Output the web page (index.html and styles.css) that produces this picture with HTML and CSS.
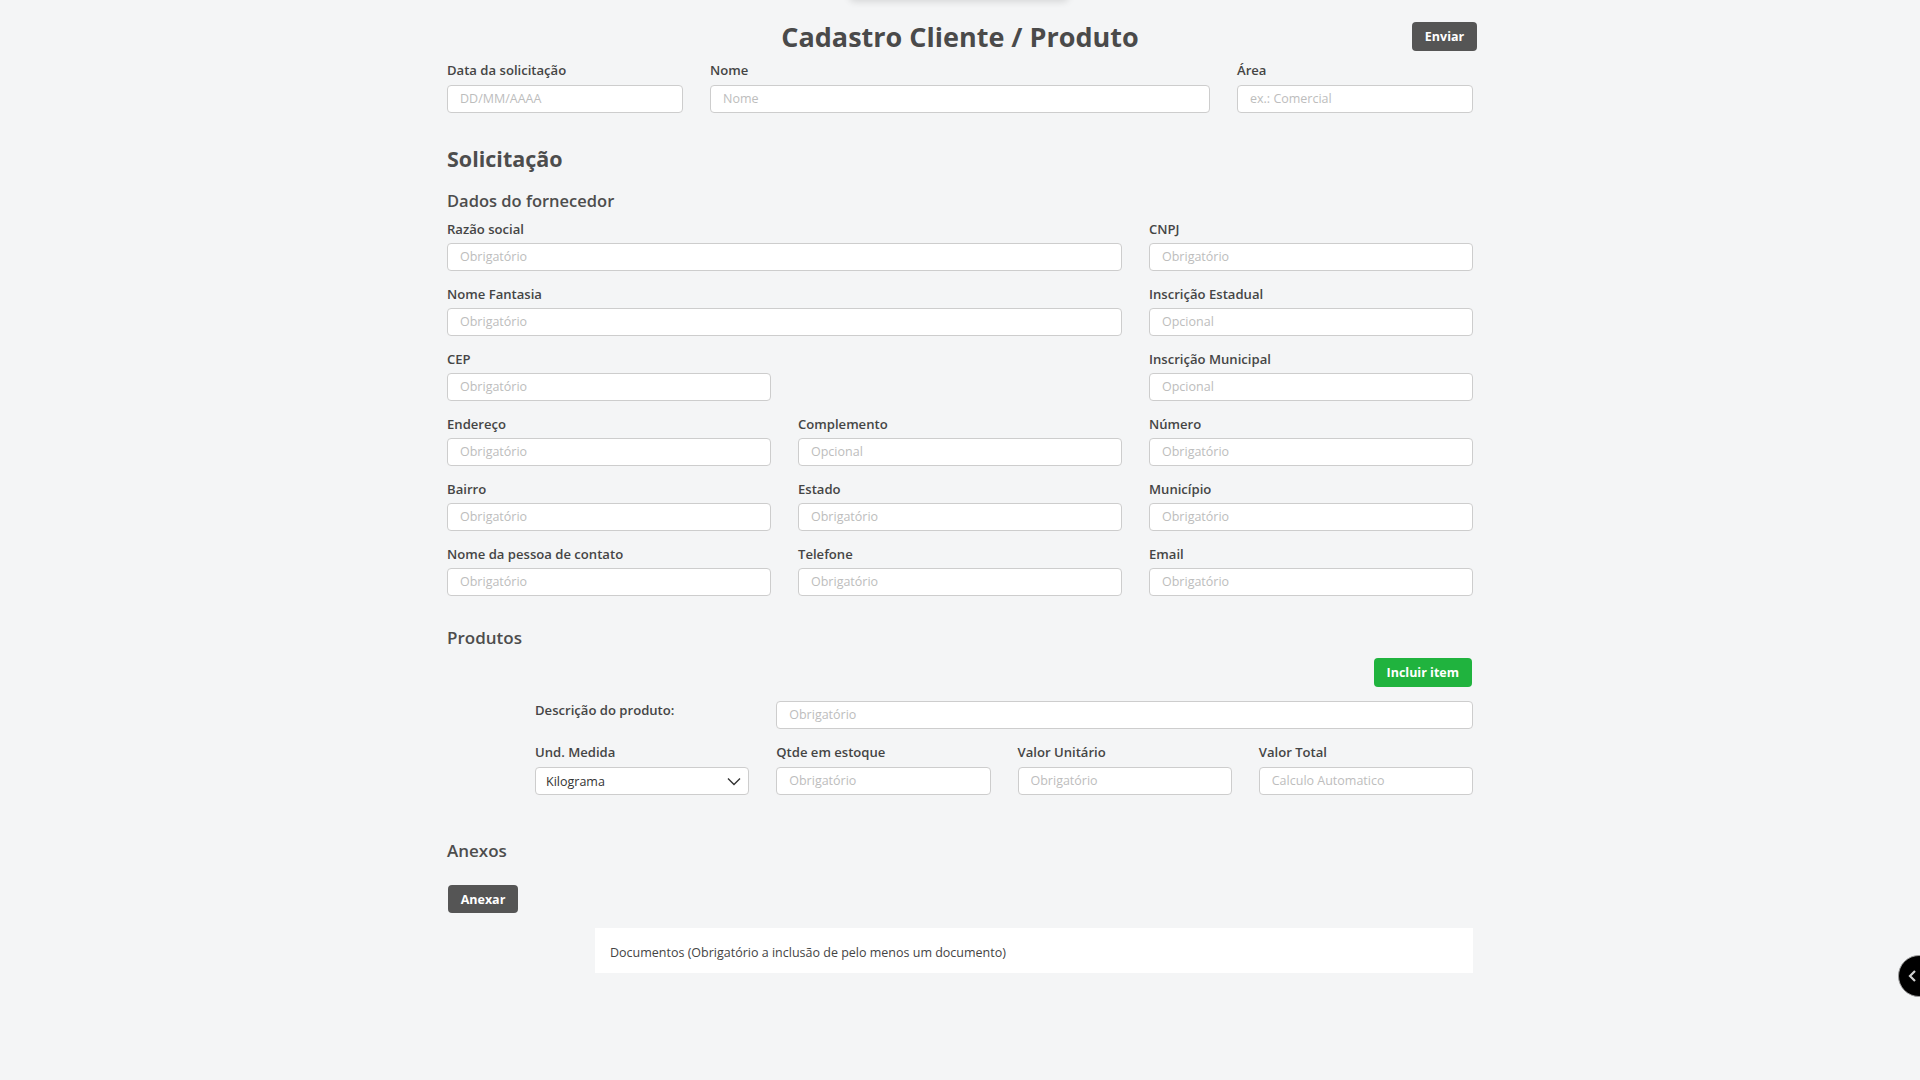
FILE: index.html
```html
<!DOCTYPE html>
<html lang="pt-BR">
<head>
<meta charset="utf-8">
<title>Cadastro Cliente / Produto</title>
<link rel="stylesheet" href="styles.css">
</head>
<body>
<div class="top-popover"></div>
<main class="page">
  <header class="header">
    <div></div>
    <h1 class="title">Cadastro Cliente / Produto</h1>
    <div class="header-actions"><button class="btn btn-dark btn-send">Enviar</button></div>
  </header>

  <div class="top-row">
    <div class="field"><label>Data da solicitação</label><input placeholder="DD/MM/AAAA"></div>
    <div class="field"><label>Nome</label><input placeholder="Nome"></div>
    <div class="field"><label>Área</label><input placeholder="ex.: Comercial"></div>
  </div>

  <h2 class="section-title">Solicitação</h2>
  <h3 class="sub-title">Dados do fornecedor</h3>

  <div class="grid3">
    <div class="field span2"><label>Razão social</label><input placeholder="Obrigatório"></div>
    <div class="field"><label>CNPJ</label><input placeholder="Obrigatório"></div>
    <div class="field span2"><label>Nome Fantasia</label><input placeholder="Obrigatório"></div>
    <div class="field"><label>Inscrição Estadual</label><input placeholder="Opcional"></div>
    <div class="field"><label>CEP</label><input placeholder="Obrigatório"></div>
    <div class="field"></div>
    <div class="field"><label>Inscrição Municipal</label><input placeholder="Opcional"></div>
    <div class="field"><label>Endereço</label><input placeholder="Obrigatório"></div>
    <div class="field"><label>Complemento</label><input placeholder="Opcional"></div>
    <div class="field"><label>Número</label><input placeholder="Obrigatório"></div>
    <div class="field"><label>Bairro</label><input placeholder="Obrigatório"></div>
    <div class="field"><label>Estado</label><input placeholder="Obrigatório"></div>
    <div class="field"><label>Município</label><input placeholder="Obrigatório"></div>
    <div class="field"><label>Nome da pessoa de contato</label><input placeholder="Obrigatório"></div>
    <div class="field"><label>Telefone</label><input placeholder="Obrigatório"></div>
    <div class="field"><label>Email</label><input placeholder="Obrigatório"></div>
  </div>

  <h3 class="sub-title products-title">Produtos</h3>
  <div class="add-row"><button class="btn btn-green">Incluir item</button></div>

  <div class="products">
    <label class="desc-label">Descrição do produto:</label>
    <input class="span3" placeholder="Obrigatório">
    <div class="field">
      <label>Und. Medida</label>
      <div class="select"><span>Kilograma</span>
        <svg width="14" height="9" viewBox="0 0 14 9"><path d="M1 1.5 L7 7.5 L13 1.5" fill="none" stroke="#333" stroke-width="1.4"/></svg>
      </div>
    </div>
    <div class="field"><label>Qtde em estoque</label><input placeholder="Obrigatório"></div>
    <div class="field"><label>Valor Unitário</label><input placeholder="Obrigatório"></div>
    <div class="field"><label>Valor Total</label><input placeholder="Calculo Automatico"></div>
  </div>

  <h3 class="sub-title attach-title">Anexos</h3>
  <button class="btn btn-dark btn-attach">Anexar</button>
  <div class="docs">Documentos (Obrigatório a inclusão de pelo menos um documento)</div>
</main>

<div class="side-toggle">
  <svg width="14" height="14" viewBox="0 0 14 14"><path d="M9 2 L4 7 L9 12" fill="none" stroke="#cfcfcf" stroke-width="2.2"/></svg>
</div>
</body>
</html>
```

FILE: styles.css
```css
* { box-sizing: border-box; }
html, body { margin: 0; padding: 0; }
body {
  background: #f4f5f6;
  font-family: "Open Sans", "Noto Sans", sans-serif;
  color: #484848;
  min-height: 1080px;
  overflow: hidden;
}

.top-popover {
  position: absolute;
  top: -30px;
  left: 849px;
  width: 220px;
  height: 30px;
  background: #f4f5f6;
  box-shadow: 0 2px 7px rgba(0,0,0,0.12);
  border-radius: 6px;
}

.page {
  width: 1026px;
  margin: 0 auto;
  padding-top: 22px;
}

.header {
  display: grid;
  grid-template-columns: 1fr auto 1fr;
  align-items: center;
  height: 29px;
}
.title {
  margin: 0;
  font-size: 27px;
  font-weight: 700;
  line-height: 29px;
  color: #4a4a4a;
}
.header-actions { display: flex; justify-content: flex-end; margin-right: -4px; }

.btn {
  border: 0;
  border-radius: 4px;
  color: #fff;
  font-family: "Open Sans", sans-serif;
  font-weight: 700;
  font-size: 12.5px;
  height: 29px;
  padding: 0 11px;
}
.btn-dark { background: #555555; }
.btn-green { background: #20b33e; padding: 0 13px; }
.btn-send { width: 65px; }

.field { display: flex; flex-direction: column; }
.field label, .desc-label {
  font-size: 13.1px;
  font-weight: 600;
  line-height: 18px;
  color: #454545;
  margin-bottom: 6px;
}
input, .select {
  height: 28px;
  width: 100%;
  border: 1px solid #cdcdcd;
  border-radius: 4px;
  background: #fff;
  padding: 0 12px 1px;
  font-family: "Open Sans", sans-serif;
  font-size: 12.5px;
  color: #333;
  outline: none;
}
input::placeholder { color: #bdbdbd; }

.top-row {
  margin-top: 10px;
  display: grid;
  grid-template-columns: 236px 1fr 236px;
  column-gap: 27px;
}

.section-title {
  margin: 32px 0 0;
  font-size: 21.5px;
  font-weight: 700;
  line-height: 28px;
  color: #4d4d4d;
}
.sub-title {
  margin: 16px 0 0;
  font-size: 16.5px;
  font-weight: 600;
  line-height: 24px;
  color: #4d4d4d;
}

.grid3 {
  margin-top: 7px;
  display: grid;
  grid-template-columns: repeat(3, 1fr);
  column-gap: 27px;
  row-gap: 14px;
}
.grid3 .field label { margin-bottom: 5px; }
.span2 { grid-column: span 2; }

.products-title { margin-top: 30px; font-size: 17px; }
.add-row { display: flex; justify-content: flex-end; margin-top: 8px; padding-right: 1px; }

.products {
  margin: 14px 0 0 88px;
  display: grid;
  grid-template-columns: repeat(4, 1fr);
  column-gap: 27px;
  row-gap: 14px;
  align-items: start;
}
.desc-label { margin: 0; padding-top: 0; }
.span3 { grid-column: span 3; }

.select {
  display: flex;
  align-items: center;
  justify-content: space-between;
  padding: 0 7px 0 10px;
}

.attach-title { margin-top: 44px; font-size: 17px; }
.btn-attach { margin-top: 22px; margin-left: 1px; width: 70px; height: 28px; display: block; }

.docs {
  margin: 15px 0 0 148px;
  height: 45px;
  background: #fff;
  padding: 4px 0 0 15px;
  display: flex;
  align-items: center;
  font-size: 12.5px;
  color: #444;
}

.side-toggle {
  position: fixed;
  top: 955px;
  left: 1898px;
  width: 42px;
  height: 42px;
  border-radius: 50%;
  background: #000;
  border: 1.5px solid #9a9a9a;
  display: flex;
  align-items: center;
  padding-left: 7px;
}
```
